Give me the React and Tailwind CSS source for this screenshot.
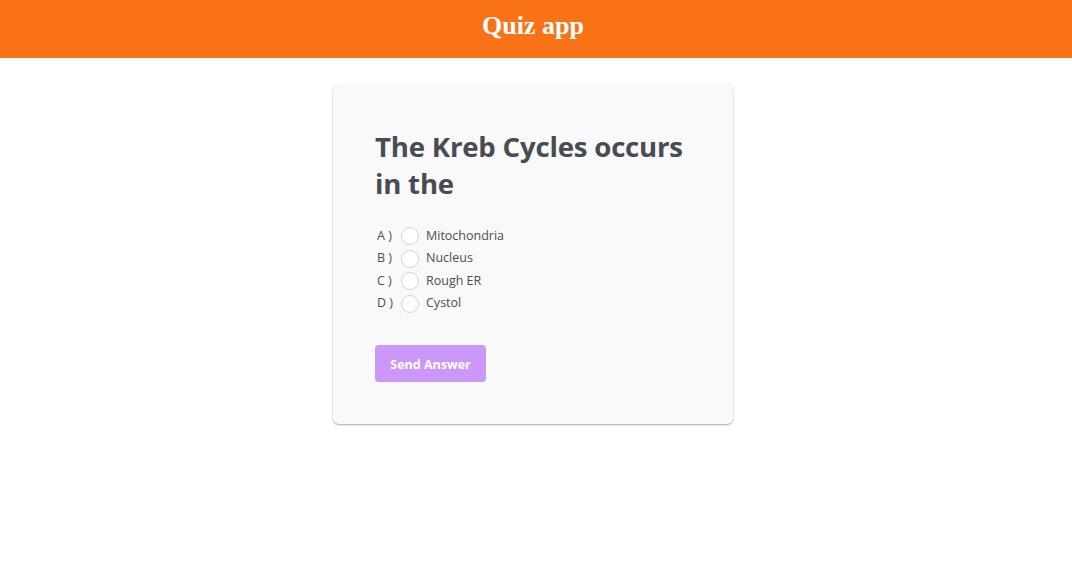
import React, { useState } from "react";

const options = [
  { key: "A", label: "Mitochondria" },
  { key: "B", label: "Nucleus" },
  { key: "C", label: "Rough ER" },
  { key: "D", label: "Cystol" },
];

const App = () => {
  const [answer, setAnswer] = useState(null);

  return (
    <div className="min-h-screen bg-white">
      <header className="h-[58px] bg-[#f97316] flex items-center justify-center pr-[6px] pb-[7px]">
        <h1 className="text-[26px] font-bold text-white font-['Liberation_Serif',serif]">
          Quiz app
        </h1>
      </header>

      <div className="flex justify-center pt-[26px] pr-[6px]">
        <div className="w-[400px] bg-[#f9f9f9] rounded-md shadow-[0_1px_2px_rgba(0,0,0,0.35)] px-[42px] pt-[44px] pb-[42px] font-['Open_Sans',sans-serif]">
          <h2 className="text-[27.6px] leading-[37px] font-bold text-[#474c54] tracking-[-0.2px]">
            The Kreb Cycles occurs in the
          </h2>

          <div className="mt-[23px] flex flex-col">
            {options.map((opt) => (
              <label
                key={opt.key}
                className="flex items-center h-[22.5px] text-[12.5px] text-[#4a4f57] cursor-pointer"
              >
                <span className="w-[26px] pl-[2px]">{opt.key} )</span>
                <input
                  type="radio"
                  name="answer"
                  checked={answer === opt.key}
                  onChange={() => setAnswer(opt.key)}
                  className="appearance-none w-[18px] h-[18px] rounded-full border border-[#d4d4d8] bg-white checked:bg-[#c994f8]"
                />
                <span className="ml-[7px]">{opt.label}</span>
              </label>
            ))}
          </div>

          <button className="mt-[30px] w-[111px] h-[37px] pt-[3px] rounded-[4px] bg-[#cb97f8] text-white text-[12.5px] font-bold">
            Send Answer
          </button>
        </div>
      </div>
    </div>
  );
};

export default App;
